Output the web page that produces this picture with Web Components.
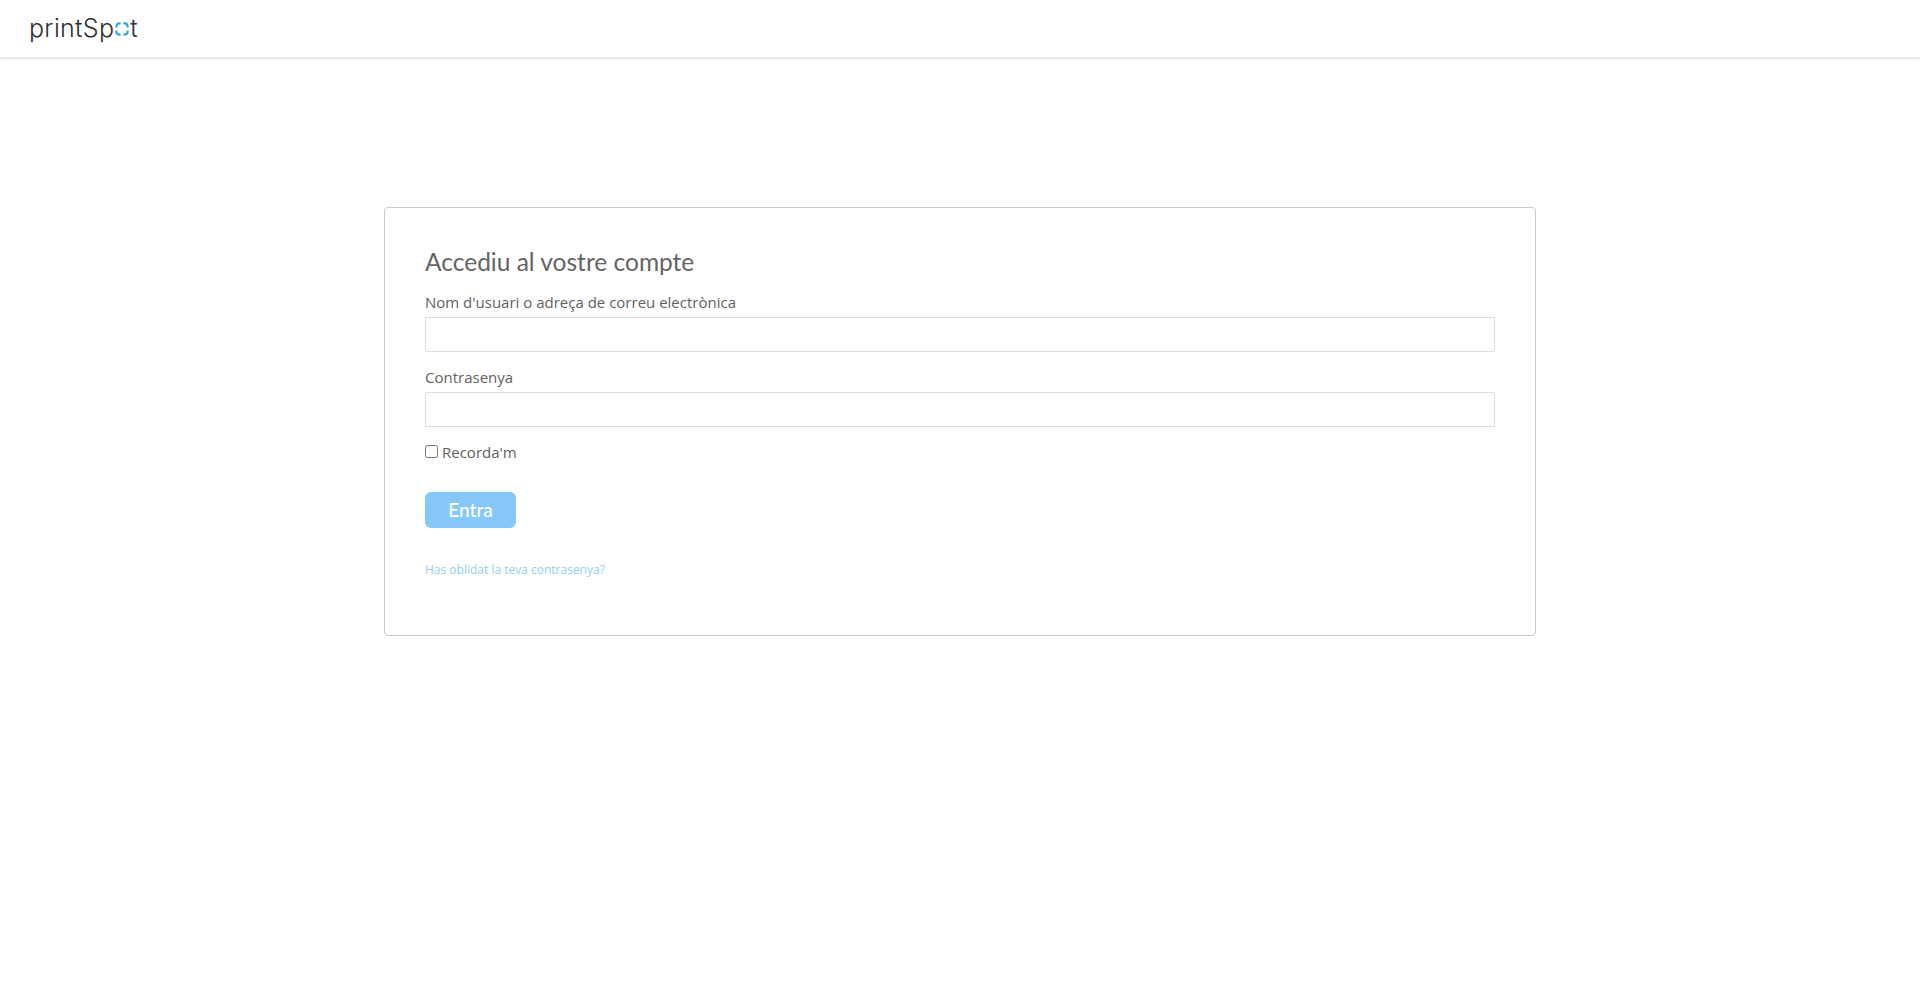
<!DOCTYPE html>
<html lang="ca">
<head>
<meta charset="utf-8">
<title>printSpot</title>
<style>
    html, body { margin: 0; padding: 0; background: #fff; }
    body { font-family: "Open Sans", sans-serif; color: #5f5f5f; }
</style>
</head>
<body>
<ps-header></ps-header>
<ps-login></ps-login>

<template id="ps-header-template">
    <style>
        :host {
            display: flex;
            align-items: center;
            box-sizing: border-box;
            height: 58px;
            padding-left: 29px;
            background: #fff;
            border-bottom: 1px solid #e4e4e4;
            box-shadow: 0 1px 3px rgba(0, 0, 0, .12);
        }
        .logo {
            display: flex;
            align-items: center;
            font-family: "Inter", sans-serif;
            font-weight: 300;
            font-size: 25px;
            line-height: 28px;
            letter-spacing: .3px;
            color: #2f2f33;
            margin-top: -2px;
        }
        svg { display: block; margin: 3px 1px 0 1px; }
    </style>
    <div class="logo">
        <span>printSp</span>
        <svg width="14" height="14" viewBox="0 0 15 15" fill="none" stroke="#29a9d6" stroke-width="2.2">
            <path d="M1.500 6V4.500a3 3 0 0 1 3-3H6"/>
            <path d="M9 1.500h1.500a3 3 0 0 1 3 3V6"/>
            <path d="M13.500 9v1.500a3 3 0 0 1-3 3H9"/>
            <path d="M6 13.500H4.500a3 3 0 0 1-3-3V9"/>
        </svg>
        <span>t</span>
    </div>
</template>

<template id="ps-field-template">
    <style>
        :host { display: block; margin-bottom: 15px; }
        label {
            display: block;
            font-size: 15px;
            line-height: 20px;
            margin-bottom: 5px;
            color: #5f5f5f;
        }
        input {
            display: block;
            box-sizing: border-box;
            width: 100%;
            height: 35px;
            padding: 0 8px;
            border: 1px solid #dcdcdc;
            border-radius: 0;
            outline: none;
            background: #fff;
            font: inherit;
        }
    </style>
    <label for="field"><slot></slot></label>
    <input id="field">
</template>

<template id="ps-login-template">
    <style>
        :host {
            display: block;
            box-sizing: border-box;
            width: 1152px;
            margin: 149px auto 0;
            padding: 40px;
            border: 1px solid #cacaca;
            border-radius: 4px;
            height: 429px;
        }
        h1 {
            margin: 0 0 17px;
            font-family: "Lato", sans-serif;
            font-weight: 400;
            font-size: 24.500px;
            line-height: 27px;
            color: #646464;
        }
        .remember {
            display: flex;
            align-items: center;
            font-size: 15px;
            line-height: 20px;
            margin-bottom: 30px;
            color: #5f5f5f;
        }
        .remember input { width: 13px; height: 13px; margin: -2px 4px 0 0; }
        button {
            display: block;
            box-sizing: border-box;
            width: 91px;
            height: 36px;
            padding: 0 0 2px;
            border: 0;
            border-radius: 6px;
            background: #86c8f9;
            color: #fff;
            font-family: "Lato", sans-serif;
            font-weight: 500;
            font-size: 19px;
            margin-bottom: 33px;
        }
        a {
            font-size: 12px;
            line-height: 17px;
            color: #92cff3;
            text-decoration: none;
            display: block;
        }
    </style>
    <h1>Accediu al vostre compte</h1>
    <ps-field>Nom d'usuari o adreça de correu electrònica</ps-field>
    <ps-field type="password">Contrasenya</ps-field>
    <label class="remember"><input type="checkbox">Recorda'm</label>
    <button type="button">Entra</button>
    <a href="#">Has oblidat la teva contrasenya?</a>
</template>

<script>
class PsHeader extends HTMLElement {
    constructor() {
        super();
        this.attachShadow({ mode: 'open' });
    }

    connectedCallback() {
        const template = document.getElementById('ps-header-template');
        this.shadowRoot.appendChild(template.content.cloneNode(true));
    }
}

class PsField extends HTMLElement {
    constructor() {
        super();
        this.attachShadow({ mode: 'open' });
    }

    connectedCallback() {
        const template = document.getElementById('ps-field-template').content.cloneNode(true);
        template.getElementById('field').type = this.getAttribute('type') || 'text';
        this.shadowRoot.appendChild(template);
    }
}

class PsLogin extends HTMLElement {
    constructor() {
        super();
        this.attachShadow({ mode: 'open' });
    }

    connectedCallback() {
        const template = document.getElementById('ps-login-template');
        this.shadowRoot.appendChild(template.content.cloneNode(true));
    }
}

customElements.define('ps-header', PsHeader);
customElements.define('ps-field', PsField);
customElements.define('ps-login', PsLogin);
</script>
</body>
</html>
